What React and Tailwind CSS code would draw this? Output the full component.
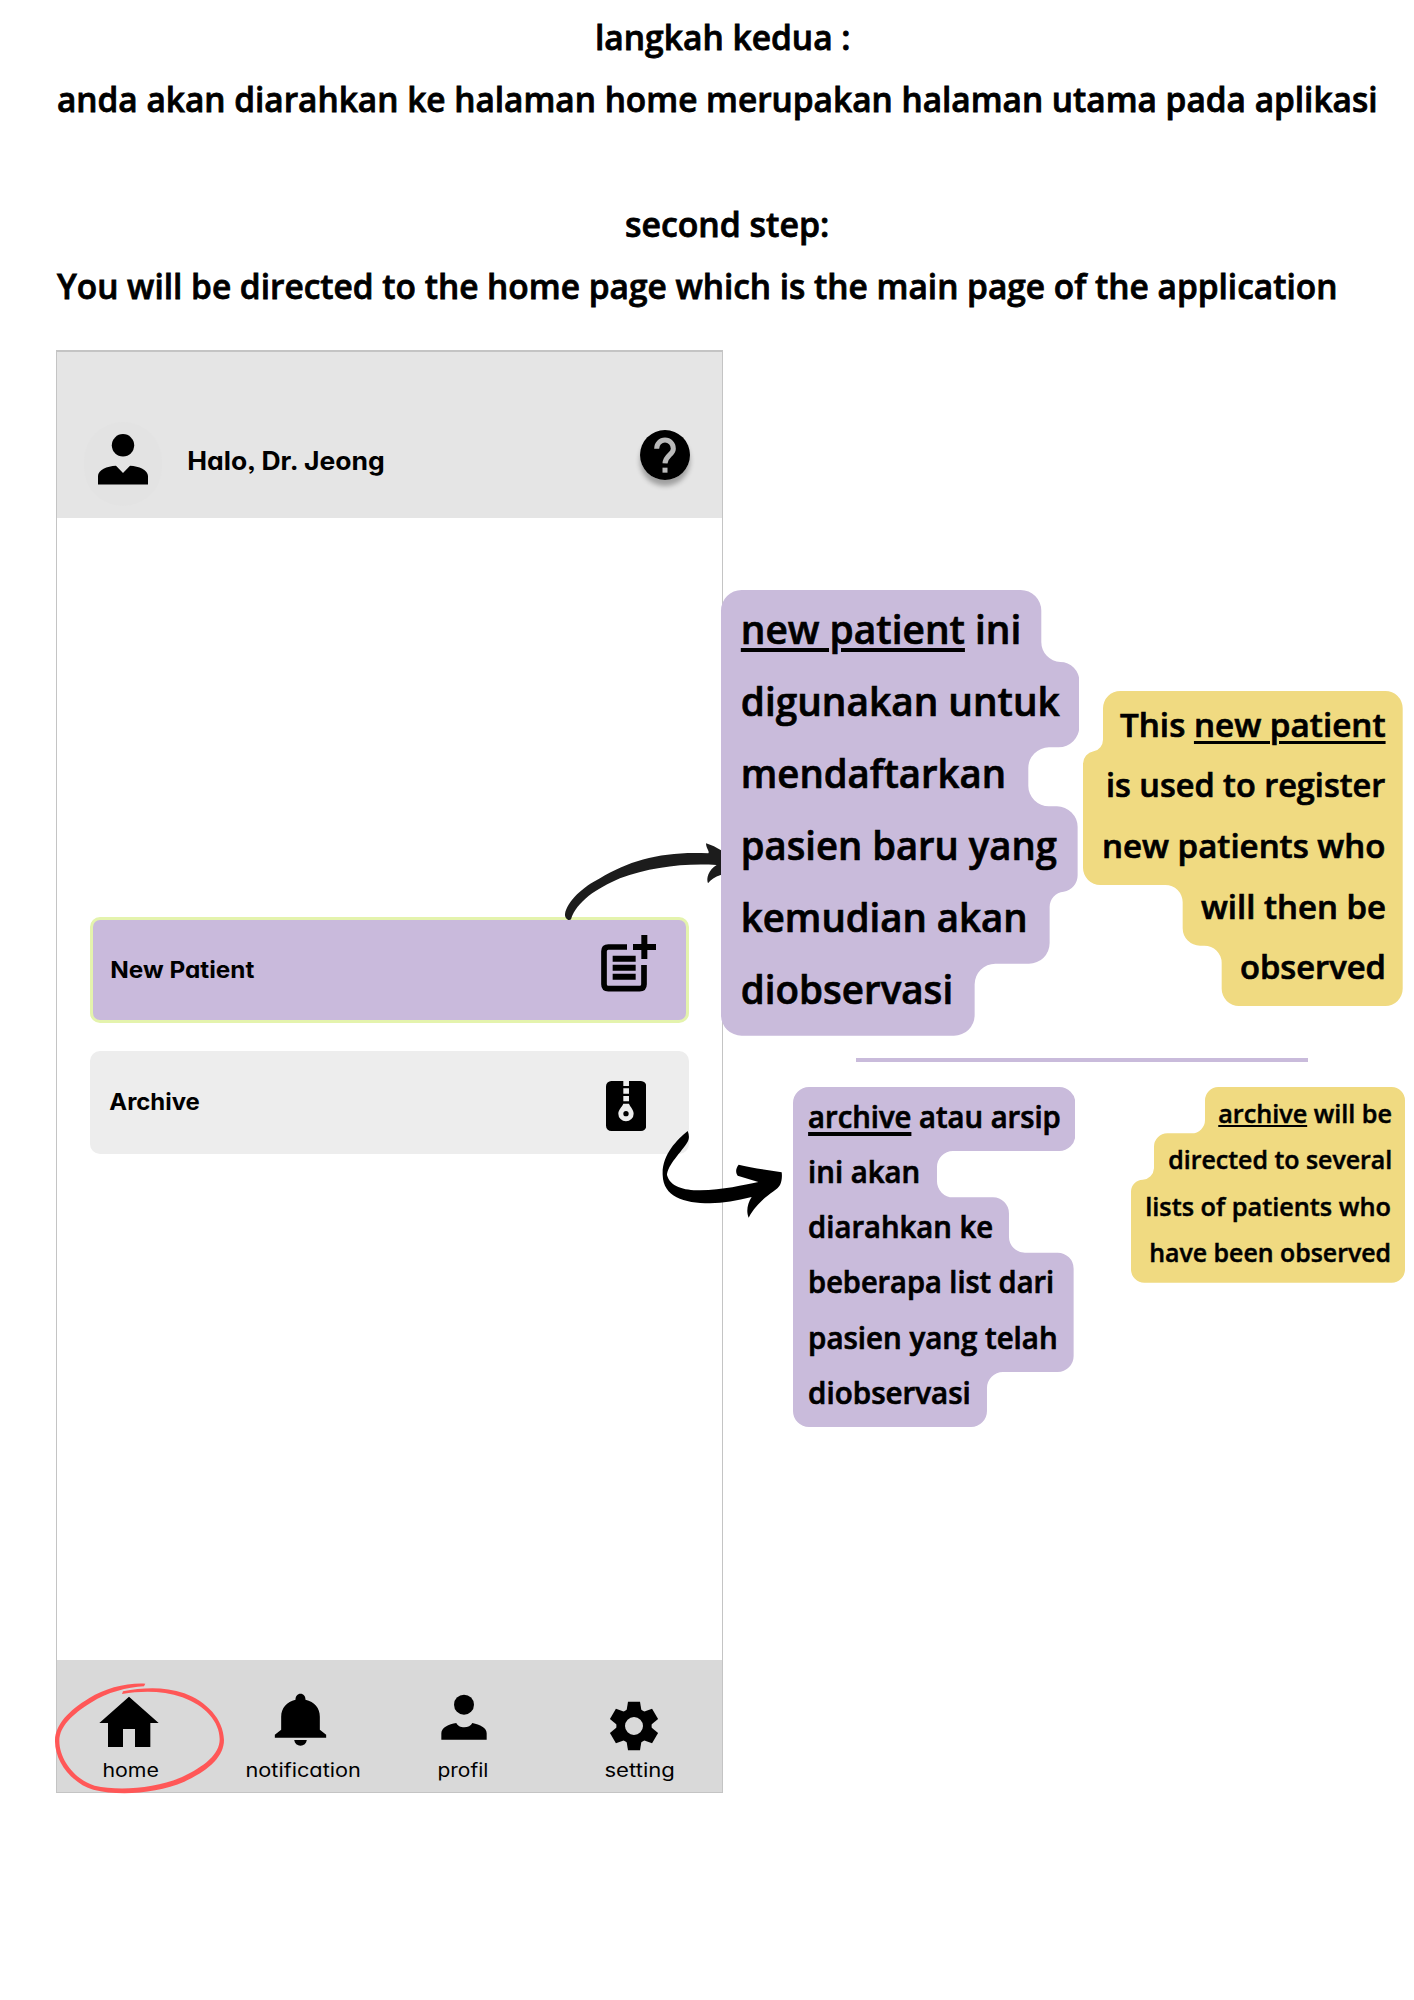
import { useLayoutEffect, useRef, useState } from "react";

// One line of text stretched to a given ink width.
function Line({ width, right = false, children }) {
  const ref = useRef(null);
  const [scale, setScale] = useState(1);
  const [bearing, setBearing] = useState(0);
  useLayoutEffect(() => {
    const side = parseFloat(getComputedStyle(ref.current).fontSize) * 0.03;
    setBearing(side);
    setScale((width + 2.7 * side) / ref.current.offsetWidth);
  }, [width]);
  return (
    <div className={right ? "ml-auto whitespace-nowrap" : "whitespace-nowrap"} style={{ width }}>
      <span
        ref={ref}
        className="inline-block origin-left"
        style={{ transform: `translateX(${-bearing}px) scaleX(${scale})` }}
      >
        {children}
      </span>
    </div>
  );
}

function Note({ viewBox, path, fill, className, children }) {
  return (
    <div className={`relative ${className}`}>
      <svg viewBox={viewBox} preserveAspectRatio="none" className="absolute inset-0 h-full w-full">
        <path d={path} fill={fill} />
      </svg>
      <div className="relative">{children}</div>
    </div>
  );
}

const LILAC = "#c9bbdb";
const YELLOW = "#f0da81";

const SHAPES = {
  newId:
    "M124 60H961A62 62 0 0 1 1023 122V216A60 60 0 0 0 1080 276A57 57 0 0 1 1137 334V470A62 62 0 0 1 1075 532H1046A62 62 0 0 0 984 594V647A62 62 0 0 0 1046 709H1070A62 62 0 0 1 1132 771V915A50 50 0 0 1 1090 965A46 46 0 0 0 1048 1012V1119A62 62 0 0 1 986 1181H885A62 62 0 0 0 823 1243V1335A62 62 0 0 1 761 1397H124A62 62 0 0 1 62 1335V122A62 62 0 0 1 124 60Z",
  newEn:
    "M182 62H977A52 52 0 0 1 1029 114V955A52 52 0 0 1 977 1007H538A52 52 0 0 1 486 955V878A52 52 0 0 0 434 826H421A52 52 0 0 1 369 774V696A52 52 0 0 0 317 644H122A52 52 0 0 1 70 592V280A38 38 0 0 1 102 243A36 36 0 0 0 130 208V114A52 52 0 0 1 182 62Z",
  archiveId:
    "M117 173H868A48 48 0 0 1 916 221V317A48 48 0 0 1 868 365H549A48 48 0 0 0 501 413V456A48 48 0 0 0 549 504H669A48 48 0 0 1 717 552V622A48 48 0 0 0 765 670H863A48 48 0 0 1 911 718V980A48 48 0 0 1 863 1028H699A48 48 0 0 0 651 1076V1145A48 48 0 0 1 603 1193H117A48 48 0 0 1 69 1145V221A48 48 0 0 1 117 173Z",
  archiveEn:
    "M415 51H935A40 40 0 0 1 975 91V598A40 40 0 0 1 935 638H193A40 40 0 0 1 153 598V364A36 36 0 0 1 188 329A36 36 0 0 0 222 295V230A40 40 0 0 1 262 190H335A40 40 0 0 0 375 150V91A40 40 0 0 1 415 51Z",
};

function Tab({ label, width, viewBox, className, iconClass, children }) {
  return (
    <div className={`flex w-[120px] flex-col items-center ${className}`}>
      <svg viewBox={viewBox} className={`h-[61px] w-[60px] ${iconClass}`}>
        {children}
      </svg>
      <div className="mt-[6.5px] text-[18.5px] font-normal leading-[24px]">
        <Line width={width}>{label}</Line>
      </div>
    </div>
  );
}

function Phone() {
  return (
    <div className="relative mt-[350px] flex h-[1443px] w-[667px] shrink-0 flex-col border border-t-2 border-[#c4c4c4] bg-white font-['Inter',sans-serif] text-black [font-feature-settings:'cv11','ss03']">
      <div className="flex h-[166px] shrink-0 items-start bg-[#e5e5e5]">
        <div className="ml-[27px] mt-[70px] h-[84px] w-[78px] rounded-full bg-[#e3e3e3]">
          <svg viewBox="0 0 78 84" className="h-full w-full">
            <circle cx="39" cy="23.3" r="11.2" />
            <path d="M14 62.5V54C14 48 23 44 32 43.7L39 51L46 43.7C55 44 64 48 64 54V62.5Z" />
          </svg>
        </div>
        <div className="ml-[26px] mt-[91.5px] text-[25px] font-bold leading-[34px]">
          <Line width={195}>Halo, Dr. Jeong</Line>
        </div>
        <div className="ml-[257px] mt-[78px] h-[50px] w-[50px] rounded-full shadow-[0_6px_5px_rgba(0,0,0,0.3)]">
          <svg viewBox="119 90 150 150" className="h-full w-full">
            <circle cx="194" cy="165" r="75" />
            <path d="M169 146A25 26 0 0 1 219 146C219 164 195 166 194 190" fill="none" stroke="#bababa" strokeWidth="15" />
            <rect x="186.500" y="203" width="15" height="15" fill="#bababa" />
          </svg>
        </div>
      </div>

      <div className="mt-[399px] flex flex-col gap-[28px] px-[33px]">
        <div className="flex h-[106px] items-start rounded-[10px] border-[3px] border-[#e4f3ad] bg-[#c9badc]">
          <div className="ml-[17.500px] mt-[34px] text-[23px] font-bold leading-[32px]">
            <Line width={142}>New Patient</Line>
          </div>
          <svg viewBox="150 300 165 170" className="ml-auto mr-[30.5px] mt-[15px] h-[56.7px] w-[55px]">
            <g fill="none" stroke="#000">
              <path d="M228 336H172Q159 336 159 349V448Q159 461 172 461H266Q279 461 279 448V390" strokeWidth="17" />
              <path d="M185 371.500H254M185 398H254M185 425H254" strokeWidth="18" />
              <path d="M246 336H315M280 300V372" strokeWidth="18" />
            </g>
          </svg>
        </div>
        <div className="flex h-[103px] items-start rounded-[10px] bg-[#ededed]">
          <div className="ml-[20px] mt-[34.500px] text-[23px] font-bold leading-[32px]">
            <Line width={88.500}>Archive</Line>
          </div>
          <svg viewBox="165 738 121 150" className="ml-auto mr-[43px] mt-[30px] h-[50px] w-[40.3px]">
            <rect x="165" y="738" width="121" height="150" rx="16" />
            <g fill="#ededed">
              <path d="M217 738H234V753H217ZM217 760H234V776H217ZM217 783H234V799H217Z" />
              <path d="M217 806H234C238 816 248 824 248 836A23 23 0 0 1 202 836C202 824 213 816 217 806Z" />
            </g>
            <circle cx="225" cy="836" r="8" />
          </svg>
        </div>
      </div>

      <nav className="mt-auto flex h-[132px] items-start bg-[#d9d9d9] pt-[30px]">
        <Tab label="home" width={55} viewBox="177 120 180 183" className="ml-[13px]" iconClass="-translate-x-px">
          <path d="M267 140L356 219H331V291H285V237H249V291H204V219H178Z" />
        </Tab>
        <Tab label="notification" width={113.5} viewBox="691 120 180 183" className="ml-[53px]" iconClass="-translate-x-[2.500px]">
          <path d="M781 131C790 131 796 138 796 149C823 155 839 174 839 200V239L858 254V263H704V254L723 239V200C723 174 740 155 766 149C766 138 772 131 781 131Z" />
          <path d="M762 270H800C798 281 791 287 781 287C771 287 764 281 762 270Z" />
        </Tab>
        <Tab label="profil" width={49.5} viewBox="132 120 180 183" className="ml-[40px]" iconClass="translate-x-px">
          <circle cx="222" cy="164" r="30" />
          <path d="M154 269V250C154 233 176 222 199 219C205 236 240 236 247 219C270 224 290 233 290 250V269Z" />
        </Tab>
        <Tab label="setting" width={69} viewBox="641 120 180 183" className="ml-[56px]" iconClass="-translate-x-[5px]">
          <circle cx="731" cy="228" r="40" fill="none" stroke="#000" strokeWidth="26" />
          {[0, 60, 120, 180, 240, 300].map((angle) => (
            <path key={angle} d="M713 155H749L754 186H708Z" transform={`rotate(${angle} 731 228)`} />
          ))}
        </Tab>
      </nav>

      {/* Hand-drawn ring around the home tab */}
      <svg viewBox="30 90 540 360" className="absolute left-[-7px] top-[1328px] h-[120px] w-[180px]">
        <path
          fill="#ff5757"
          d="M316 101C260 98 195 115 148 144C85 182 46 225 45 270C43 335 98 402 160 419C240 439 350 430 433 395C505 362 552 320 552 270C550 207 500 155 433 130C372 109 310 112 249 124L246 132C310 121 370 122 427 142C495 167 539 215 539 268C539 313 493 350 426 381C350 414 240 424 164 407C107 390 58 330 58 272C59 230 96 193 155 157C200 128 262 111 312 109Z"
        />
      </svg>

      {/* Arrows from the cards to their notes */}
      <svg viewBox="0 0 720 1170" className="absolute left-[493px] top-[483px] h-[390px] w-[240px]">
        <path
          fill="#1c1c1c"
          d="M45 238C50 200 100 155 150 130C240 75 340 48 475 55C480 50 468 40 468 25C485 30 500 38 512 45L530 60V110L512 120C495 125 482 135 474 145C468 130 475 105 500 90C400 84 300 97 210 130C140 160 80 200 63 253C56 260 44 250 45 238Z"
        />
        <path d="M413 888C418 900 418 912 413 920C395 950 352 990 351 1020C360 1055 400 1066 450 1066C520 1065 580 1050 625 1041L563 1022C556 1012 557 1000 566 989C600 998 650 1005 695 1012C697 1025 695 1040 690 1050C680 1070 630 1085 596 1148C588 1130 592 1105 605 1086C560 1097 520 1104 480 1105C400 1105 340 1085 338 1020C335 960 380 915 413 888Z" />
      </svg>
    </div>
  );
}

export default function App() {
  return (
    <div className="relative h-[2000px] w-[1414px] overflow-hidden bg-white font-['Open_Sans',sans-serif] font-semibold text-black">
      <header className="absolute left-0 top-0 w-full pt-[6px] text-[34.5px] leading-[62.3px] [-webkit-text-stroke:0.8px_#000]">
        <div className="ml-[596px]"><Line width={253}>langkah kedua :</Line></div>
        <div className="ml-[58px]"><Line width={1318}>anda akan diarahkan ke halaman home merupakan halaman utama pada aplikasi</Line></div>
        <div className="ml-[626px] mt-[62.3px]"><Line width={201}>second step:</Line></div>
        <div className="ml-[58px]"><Line width={1278}>You will be directed to the home page which is the main page of the application</Line></div>
      </header>

      <main className="flex items-start pl-[56px]">
        <Phone />
        <section className="relative -ml-[2.300px] mt-[590px] flex flex-col [-webkit-text-stroke:0.7px_#000]">
          <div className="flex items-start">
            <Note viewBox="62 60 1075 1337" path={SHAPES.newId} fill={LILAC} className="h-[445.7px] w-[358.3px] pl-[21px] pt-[3px] text-[39.5px] leading-[72.1px]">
              <Line width={277}>
                <span className="underline decoration-[4px] underline-offset-[4px]">new patient</span> ini
              </Line>
              <Line width={315.7}>digunakan untuk</Line>
              <Line width={262.500}>mendaftarkan</Line>
              <Line width={313}>pasien baru yang</Line>
              <Line width={284}>kemudian akan</Line>
              <Line width={209.5}>diobservasi</Line>
            </Note>
            <Note viewBox="70 62 959 945" path={SHAPES.newEn} fill={YELLOW} className="ml-[4.300px] mt-[100.7px] h-[315px] w-[319.7px] pr-[19.300px] pt-[4.200px] text-[33px] leading-[60.6px]">
              <Line right width={263}>
                This <span className="underline decoration-[3.300px] underline-offset-[3.500px]">new patient</span>
              </Line>
              <Line right width={276.7}>is used to register</Line>
              <Line right width={280.7}>new patients who</Line>
              <Line right width={182}>will then be</Line>
              <Line right width={143}>observed</Line>
            </Note>
          </div>
          <div className="ml-[135.300px] mt-[22.7px] h-[3.700px] w-[452px] bg-[#c9bbdb]" />
          <div className="mt-[25px] flex items-start">
            <Note viewBox="69 173 847 1020" path={SHAPES.archiveId} fill={LILAC} className="ml-[72.300px] h-[340px] w-[282.3px] pl-[16.300px] pt-[1.500px] text-[30px] leading-[55.3px]">
              <Line width={250}>
                <span className="underline decoration-[3.500px] underline-offset-[4px]">archive</span> atau arsip
              </Line>
              <Line width={110}>ini akan</Line>
              <Line width={182.7}>diarahkan ke</Line>
              <Line width={244}>beberapa list dari</Line>
              <Line width={247}>pasien yang telah</Line>
              <Line width={160}>diobservasi</Line>
            </Note>
            <Note viewBox="153 51 822 587" path={SHAPES.archiveEn} fill={YELLOW} className="ml-[55.700px] h-[195.7px] w-[274px] pr-[14.700px] pt-[3px] text-[25.5px] leading-[46.3px] [-webkit-text-stroke:0.5px_#000]">
              <Line right width={171.7}>
                <span className="underline decoration-[2px] underline-offset-[2px]">archive</span> will be
              </Line>
              <Line right width={221.7}>directed to several</Line>
              <Line right width={244}>lists of patients who</Line>
              <Line right width={240}>have been observed</Line>
            </Note>
          </div>
        </section>
      </main>
    </div>
  );
}
